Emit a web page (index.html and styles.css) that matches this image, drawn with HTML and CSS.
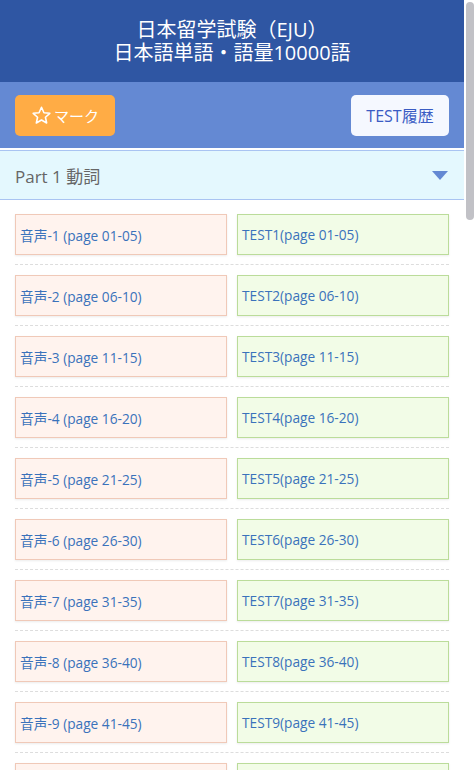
FILE: index.html
```html
<!DOCTYPE html>
<html lang="ja">
<head>
<meta charset="utf-8">
<link rel="stylesheet" href="styles.css">
</head>
<body>
<div class="viewport">
<main class="content">
<header class="title-bar">
  <div class="title-line">日本留学試験（EJU）</div>
  <div class="title-line">日本語単語・語量10000語</div>
</header>
<div class="toolbar">
  <button class="btn btn-mark">
    <svg class="star" viewBox="0 0 24 24" width="21" height="21"><path d="M12 2.6l2.8 6.2 6.7.7-5 4.5 1.4 6.6L12 17.2l-5.9 3.4 1.4-6.6-5-4.5 6.7-.7z" fill="none" stroke="#fff" stroke-width="1.8" stroke-linejoin="round"/></svg>
    <span>マーク</span>
  </button>
  <button class="btn btn-history">TEST履歴</button>
</div>
<div class="section-head">
  <span class="section-title">Part 1 動詞</span>
  <span class="caret"></span>
</div>
<div class="list">
  <div class="row"><div class="cell audio">音声-1 (page 01-05)</div><div class="cell test">TEST1(page 01-05)</div></div>
  <div class="row"><div class="cell audio">音声-2 (page 06-10)</div><div class="cell test">TEST2(page 06-10)</div></div>
  <div class="row"><div class="cell audio">音声-3 (page 11-15)</div><div class="cell test">TEST3(page 11-15)</div></div>
  <div class="row"><div class="cell audio">音声-4 (page 16-20)</div><div class="cell test">TEST4(page 16-20)</div></div>
  <div class="row"><div class="cell audio">音声-5 (page 21-25)</div><div class="cell test">TEST5(page 21-25)</div></div>
  <div class="row"><div class="cell audio">音声-6 (page 26-30)</div><div class="cell test">TEST6(page 26-30)</div></div>
  <div class="row"><div class="cell audio">音声-7 (page 31-35)</div><div class="cell test">TEST7(page 31-35)</div></div>
  <div class="row"><div class="cell audio">音声-8 (page 36-40)</div><div class="cell test">TEST8(page 36-40)</div></div>
  <div class="row"><div class="cell audio">音声-9 (page 41-45)</div><div class="cell test">TEST9(page 41-45)</div></div>
  <div class="row"><div class="cell audio">音声-10 (page 46-50)</div><div class="cell test">TEST10(page 46-50)</div></div>
</div>
</main>
<aside class="scrollbar"><div class="thumb"></div></aside>
</div>
</body>
</html>
```
FILE: styles.css
```css
* { box-sizing: border-box; }
html, body { margin: 0; padding: 0; }
body {
  font-family: "Open Sans", "Noto Sans CJK JP", sans-serif;
  background: #fff;
  overflow: hidden;
}
.viewport {
  display: flex;
  height: 770px;
  overflow: hidden;
}
.content {
  width: 464px;
  flex: none;
}
.scrollbar {
  width: 12px;
  flex: none;
  background: #fff;
  padding: 2px 2px 0 2px;
}
.thumb {
  width: 8px;
  height: 218px;
  border-radius: 4px;
  background: #c1c1c6;
}
.title-bar {
  background: #2f56a3;
  color: #fff;
  text-align: center;
  padding: 18px 0 18px;
  font-size: 20px;
  line-height: 23px;
  height: 82px;
}
.toolbar {
  background: #6489d3;
  display: flex;
  justify-content: space-between;
  align-items: center;
  padding: 0 15px;
  height: 66px;
}
.btn {
  border: none;
  border-radius: 5px;
  height: 41px;
  font-family: inherit;
  font-size: 15px;
  display: flex;
  align-items: center;
  justify-content: center;
  padding: 0;
}
.btn-mark {
  width: 100px;
  background: #ffac45;
  color: #fff;
  gap: 2px;
}
.btn-history {
  width: 98px;
  background: #f5f8ff;
  color: #3a5cc4;
  font-size: 16px;
}
.section-head {
  margin-top: 2px;
  background: #e4f8fe;
  border-top: 1px solid #a9c4f2;
  border-bottom: 1px solid #a9c4f2;
  height: 50px;
  display: flex;
  align-items: center;
  justify-content: space-between;
  padding: 0 15px;
}
.section-title {
  color: #666;
  font-size: 17px;
}
.caret {
  width: 0; height: 0;
  border-left: 8px solid transparent;
  border-right: 8px solid transparent;
  border-top: 9px solid #6489d3;
  margin-right: 1px;
}
.list { padding: 4px 15px 0; }
.row {
  display: flex;
  gap: 10px;
  padding: 10px 0 9px;
  border-bottom: 1px dashed #ddd;
}
.cell {
  flex: 1;
  height: 41px;
  display: flex;
  align-items: center;
  padding-left: 4px;
  font-size: 13.7px;
  color: #3a72bb;
  box-shadow: 0 1px 2px rgba(0,0,0,0.08);
}
.audio { background: #fff3ee; border: 1px solid #f0c9b8; }
.test { background: #f2fce7; border: 1px solid #bbdc9a; }
```
